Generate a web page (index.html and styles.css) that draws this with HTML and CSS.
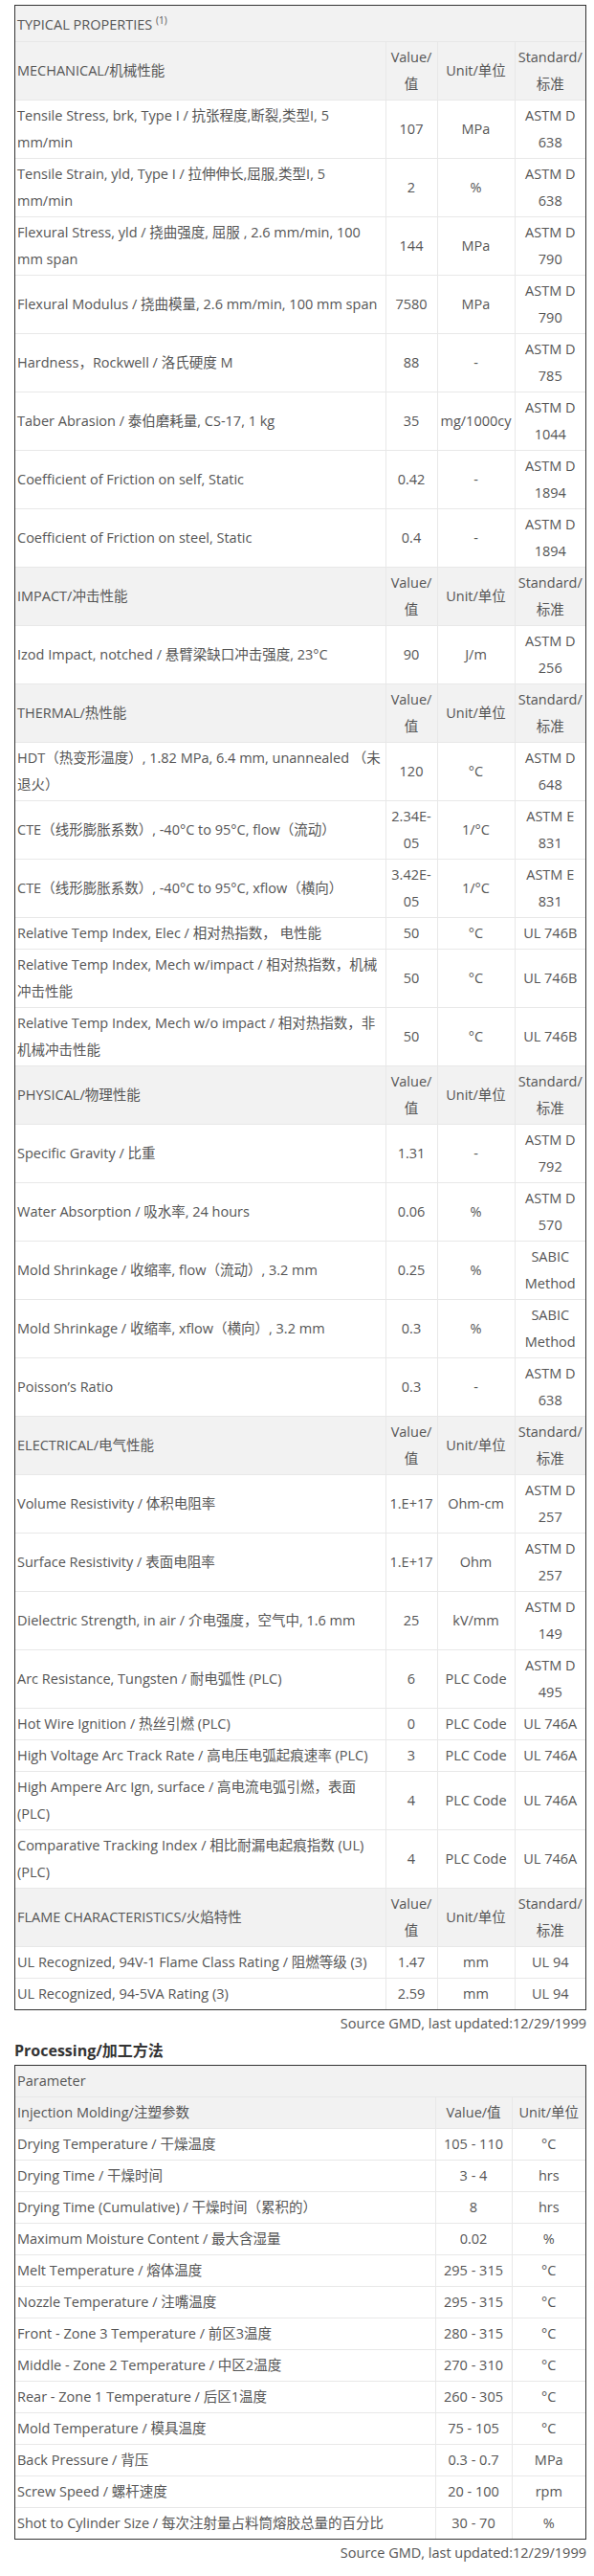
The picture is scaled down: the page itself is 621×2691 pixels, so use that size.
FILE: index.html
```html
<!DOCTYPE html>
<html lang="zh">
<head>
<meta charset="utf-8">
<title>Typical Properties</title>
<link rel="stylesheet" href="styles.css">
</head>
<body>
<div class="page">
  <div class="tbl-wrap">
    <table class="props">
      <colgroup>
        <col class="c-label"><col class="c-val"><col class="c-unit"><col class="c-std">
      </colgroup>
      <tbody>
        <tr class="title"><td colspan="4">TYPICAL PROPERTIES <sup>(1)</sup></td></tr>
        <tr class="head"><td>MECHANICAL/机械性能</td><td>Value/值</td><td>Unit/单位</td><td>Standard/标准</td></tr>
        <tr><td>Tensile Stress, brk, Type I / 抗张程度,断裂,类型I, 5 mm/min</td><td>107</td><td>MPa</td><td>ASTM D 638</td></tr>
        <tr><td>Tensile Strain, yld, Type I / 拉伸伸长,屈服,类型I, 5 mm/min</td><td>2</td><td>%</td><td>ASTM D 638</td></tr>
        <tr><td>Flexural Stress, yld / 挠曲强度, 屈服 , 2.6 mm/min, 100 mm span</td><td>144</td><td>MPa</td><td>ASTM D 790</td></tr>
        <tr><td>Flexural Modulus / 挠曲模量, 2.6 mm/min, 100 mm span</td><td>7580</td><td>MPa</td><td>ASTM D 790</td></tr>
        <tr><td>Hardness，Rockwell / 洛氏硬度 M</td><td>88</td><td>-</td><td>ASTM D 785</td></tr>
        <tr><td>Taber Abrasion / 泰伯磨耗量, CS-17, 1 kg</td><td>35</td><td>mg/1000cy</td><td>ASTM D 1044</td></tr>
        <tr><td>Coefficient of Friction on self, Static</td><td>0.42</td><td>-</td><td>ASTM D 1894</td></tr>
        <tr><td>Coefficient of Friction on steel, Static</td><td>0.4</td><td>-</td><td>ASTM D 1894</td></tr>
        <tr class="head"><td>IMPACT/冲击性能</td><td>Value/值</td><td>Unit/单位</td><td>Standard/标准</td></tr>
        <tr><td>Izod Impact, notched / 悬臂梁缺口冲击强度, 23°C</td><td>90</td><td>J/m</td><td>ASTM D 256</td></tr>
        <tr class="head"><td>THERMAL/热性能</td><td>Value/值</td><td>Unit/单位</td><td>Standard/标准</td></tr>
        <tr><td>HDT（热变形温度）, 1.82 MPa, 6.4 mm, unannealed （未退火）</td><td>120</td><td>°C</td><td>ASTM D 648</td></tr>
        <tr><td>CTE（线形膨胀系数）, -40°C to 95°C, flow（流动）</td><td>2.34E-05</td><td>1/°C</td><td>ASTM E 831</td></tr>
        <tr><td>CTE（线形膨胀系数）, -40°C to 95°C, xflow（横向）</td><td>3.42E-05</td><td>1/°C</td><td>ASTM E 831</td></tr>
        <tr><td>Relative Temp Index, Elec / 相对热指数， 电性能</td><td>50</td><td>°C</td><td>UL 746B</td></tr>
        <tr><td>Relative Temp Index, Mech w/impact / 相对热指数，机械冲击性能</td><td>50</td><td>°C</td><td>UL 746B</td></tr>
        <tr><td>Relative Temp Index, Mech w/o impact / 相对热指数，非机械冲击性能</td><td>50</td><td>°C</td><td>UL 746B</td></tr>
        <tr class="head"><td>PHYSICAL/物理性能</td><td>Value/值</td><td>Unit/单位</td><td>Standard/标准</td></tr>
        <tr><td>Specific Gravity / 比重</td><td>1.31</td><td>-</td><td>ASTM D 792</td></tr>
        <tr><td>Water Absorption / 吸水率, 24 hours</td><td>0.06</td><td>%</td><td>ASTM D 570</td></tr>
        <tr><td>Mold Shrinkage / 收缩率, flow（流动）, 3.2 mm</td><td>0.25</td><td>%</td><td>SABIC Method</td></tr>
        <tr><td>Mold Shrinkage / 收缩率, xflow（横向）, 3.2 mm</td><td>0.3</td><td>%</td><td>SABIC Method</td></tr>
        <tr><td>Poisson’s Ratio</td><td>0.3</td><td>-</td><td>ASTM D 638</td></tr>
        <tr class="head"><td>ELECTRICAL/电气性能</td><td>Value/值</td><td>Unit/单位</td><td>Standard/标准</td></tr>
        <tr><td>Volume Resistivity / 体积电阻率</td><td>1.E+17</td><td>Ohm-cm</td><td>ASTM D 257</td></tr>
        <tr><td>Surface Resistivity / 表面电阻率</td><td>1.E+17</td><td>Ohm</td><td>ASTM D 257</td></tr>
        <tr><td>Dielectric Strength, in air / 介电强度，空气中, 1.6 mm</td><td>25</td><td>kV/mm</td><td>ASTM D 149</td></tr>
        <tr><td>Arc Resistance, Tungsten / 耐电弧性 (PLC)</td><td>6</td><td>PLC Code</td><td>ASTM D 495</td></tr>
        <tr><td>Hot Wire Ignition / 热丝引燃 (PLC)</td><td>0</td><td>PLC Code</td><td>UL 746A</td></tr>
        <tr><td>High Voltage Arc Track Rate / 高电压电弧起痕速率 (PLC)</td><td>3</td><td>PLC Code</td><td>UL 746A</td></tr>
        <tr><td>High Ampere Arc Ign, surface / 高电流电弧引燃，表面 (PLC)</td><td>4</td><td>PLC Code</td><td>UL 746A</td></tr>
        <tr><td>Comparative Tracking Index / 相比耐漏电起痕指数 (UL) (PLC)</td><td>4</td><td>PLC Code</td><td>UL 746A</td></tr>
        <tr class="head"><td>FLAME CHARACTERISTICS/火焰特性</td><td>Value/值</td><td>Unit/单位</td><td>Standard/标准</td></tr>
        <tr><td>UL Recognized, 94V-1 Flame Class Rating / 阻燃等级 (3)</td><td>1.47</td><td>mm</td><td>UL 94</td></tr>
        <tr><td>UL Recognized, 94-5VA Rating (3)</td><td>2.59</td><td>mm</td><td>UL 94</td></tr>
      </tbody>
    </table>
  </div>
  <p class="source">Source GMD, last updated:12/29/1999</p>

  <h3 class="section-title">Processing/加工方法</h3>
  <div class="tbl-wrap">
    <table class="props proc">
      <colgroup>
        <col class="p-label"><col class="p-val"><col class="p-unit">
      </colgroup>
      <tbody>
        <tr class="head"><td colspan="3">Parameter</td></tr>
        <tr class="head"><td>Injection Molding/注塑参数</td><td>Value/值</td><td>Unit/单位</td></tr>
        <tr><td>Drying Temperature / 干燥温度</td><td>105 - 110</td><td>°C</td></tr>
        <tr><td>Drying Time / 干燥时间</td><td>3 - 4</td><td>hrs</td></tr>
        <tr><td>Drying Time (Cumulative) / 干燥时间（累积的）</td><td>8</td><td>hrs</td></tr>
        <tr><td>Maximum Moisture Content / 最大含湿量</td><td>0.02</td><td>%</td></tr>
        <tr><td>Melt Temperature / 熔体温度</td><td>295 - 315</td><td>°C</td></tr>
        <tr><td>Nozzle Temperature / 注嘴温度</td><td>295 - 315</td><td>°C</td></tr>
        <tr><td>Front - Zone 3 Temperature / 前区3温度</td><td>280 - 315</td><td>°C</td></tr>
        <tr><td>Middle - Zone 2 Temperature / 中区2温度</td><td>270 - 310</td><td>°C</td></tr>
        <tr><td>Rear - Zone 1 Temperature / 后区1温度</td><td>260 - 305</td><td>°C</td></tr>
        <tr><td>Mold Temperature / 模具温度</td><td>75 - 105</td><td>°C</td></tr>
        <tr><td>Back Pressure / 背压</td><td>0.3 - 0.7</td><td>MPa</td></tr>
        <tr><td>Screw Speed / 螺杆速度</td><td>20 - 100</td><td>rpm</td></tr>
        <tr><td>Shot to Cylinder Size / 每次注射量占料筒熔胶总量的百分比</td><td>30 - 70</td><td>%</td></tr>
      </tbody>
    </table>
  </div>
  <p class="source">Source GMD, last updated:12/29/1999</p>
</div>
</body>
</html>
```
FILE: styles.css
```css
html, body {
  margin: 0;
  padding: 0;
  background: #fff;
}
body {
  font-family: "Open Sans", "Noto Sans CJK SC", sans-serif;
  font-size: 14.5px;
  line-height: 28px;
  color: #555;
}
.page {
  padding: 5px 8px 10px 15px;
}
.tbl-wrap {
  border: 1px solid #333;
}
.props {
  width: 100%;
  border-collapse: collapse;
  border-style: hidden;
  table-layout: fixed;
}
.props td {
  border: 1px solid #e8e8e8;
  padding: 2px 1px;
  text-align: center;
  vertical-align: middle;
  line-height: 28px;
}
.props td:first-child {
  text-align: left;
  padding-left: 2px;
  padding-right: 2px;
}
.props tr.head td,
.props tr.title td {
  background: #f2f2f2;
}
.props tr.title td {
  padding-top: 6px;
  padding-bottom: 3px;
}
.props sup {
  font-size: 10px;
  line-height: 0;
}
.c-label { width: 387px; }
.c-val { width: 54px; }
.c-unit { width: 81px; }
.c-std { width: 74px; }
.p-label { width: 439px; }
.p-val { width: 80px; }
.p-unit { width: 77px; }
.source {
  margin: 0;
  text-align: right;
  line-height: 28px;
}
.section-title {
  margin: 0;
  font-size: 16px;
  font-weight: bold;
  line-height: 29px;
  color: #333;
}
```
